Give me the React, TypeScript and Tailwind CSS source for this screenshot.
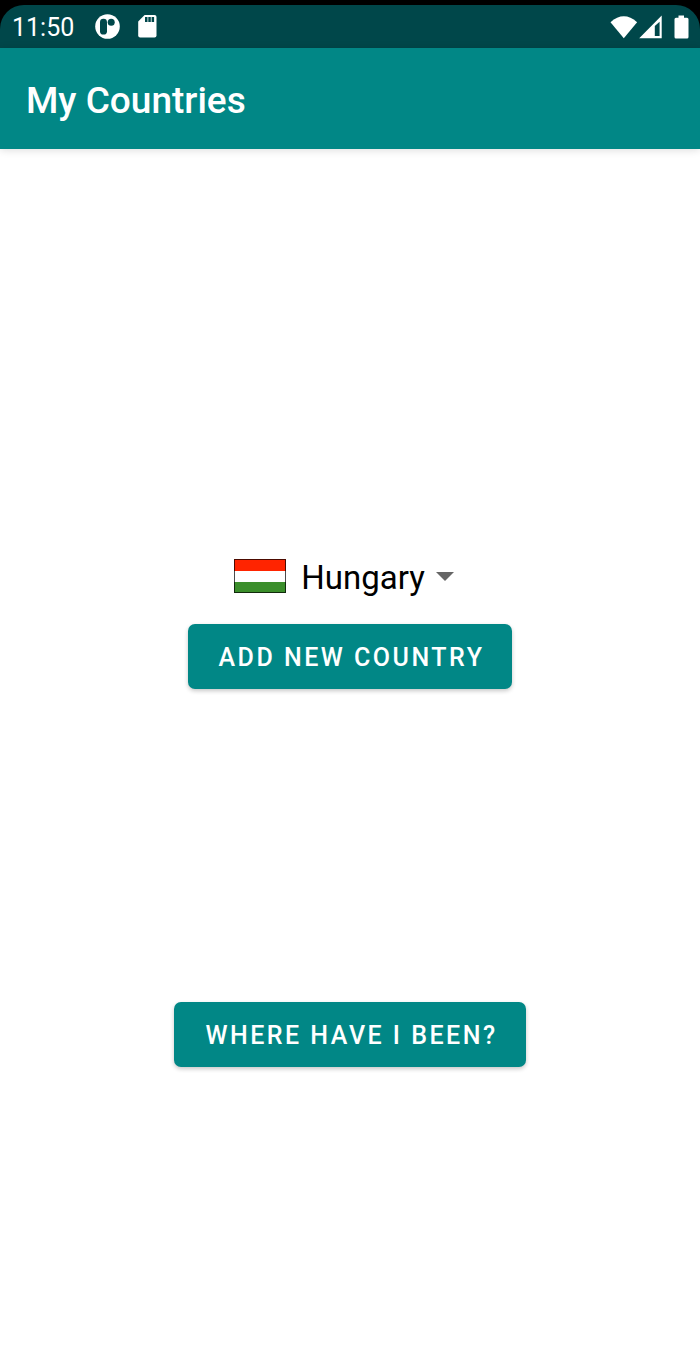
import { useState } from "react";

function StatusBar() {
  return (
    <div className="bg-black pt-[5px]">
      <div className="flex h-[43px] items-center justify-between rounded-t-[24px] bg-[#00474a] pr-[11px] pl-3 text-white">
        <div className="flex items-center">
          <span className="pt-[3px] text-[25px] leading-8">11:50</span>
          <svg className="ml-[21px] size-[25px]" viewBox="0 0 25 25" aria-hidden="true">
            <circle cx="12.5" cy="12.5" r="12.3" fill="white" />
            <rect x="5" y="4.8" width="7" height="15.8" rx="3.4" fill="#00474a" />
            <circle cx="16.2" cy="8.2" r="3.5" fill="#00474a" />
          </svg>
          <svg className="ml-[18px] h-[23px] w-[19px]" viewBox="0 0 19 23" aria-hidden="true">
            <path
              d="M6.6 0H16.5Q18.5 0 18.5 2V20.5Q18.5 22.5 16.5 22.5H2.2Q.2 22.5 .2 20.5V6.4Z"
              fill="white"
            />
            <path d="M7 2h2.5v5H7zM10.3 2h2.5v5h-2.5zM13.6 2h2.5v5h-2.5z" fill="#00474a" />
          </svg>
        </div>
        <div className="flex items-center">
          <svg className="h-6 w-7" viewBox="0 0 28 24" aria-hidden="true">
            <path d="M.5 7.2Q13.8-4.6 27.1 7.2L13.8 23.2Z" fill="white" />
          </svg>
          <svg className="ml-px h-6 w-[23px]" viewBox="0 0 23 24" aria-hidden="true">
            <path
              fillRule="evenodd"
              d="M22.7.5V23.3H.2ZM20.6 6.8L15.8 11V21H20.6Z"
              fill="white"
            />
          </svg>
          <svg className="ml-3 h-6 w-[15px]" viewBox="0 0 15 24" aria-hidden="true">
            <path
              d="M4.5.5H10V2.7H13Q14.5 2.7 14.5 4.2V22Q14.5 23.5 13 23.5H2Q.5 23.5 .5 22V4.2Q.5 2.7 2 2.7H4.5Z"
              fill="white"
            />
          </svg>
        </div>
      </div>
    </div>
  );
}

function HungaryFlag() {
  return (
    <svg className="h-[34px] w-[52px]" viewBox="0 0 52 34" role="img" aria-label="Flag of Hungary">
      <rect width="52" height="12" fill="#ff2400" />
      <rect y="12" width="52" height="11" fill="white" />
      <rect y="23" width="52" height="11" fill="#3b8e2b" />
      <rect x=".5" y=".5" width="51" height="33" fill="none" stroke="black" strokeOpacity=".7" />
    </svg>
  );
}

function ActionButton({ children }: { children: string }) {
  return (
    <button
      type="button"
      className="h-[65px] rounded-[7px] bg-[#018786] pt-[3px] pr-7 pl-[31px] text-[25px] leading-8 font-medium tracking-widest text-white uppercase shadow-[0_2px_4px_rgba(0,0,0,0.22)]"
    >
      {children}
    </button>
  );
}

export default function App() {
  const [country, setCountry] = useState("Hungary");

  return (
    <div className="flex min-h-screen flex-col bg-white font-['Roboto',sans-serif]">
      <StatusBar />
      <header className="flex h-[101px] items-center bg-[#018786] px-[26px] pt-1 shadow-[0_1px_8px_rgba(0,0,0,0.14)]">
        <h1 className="text-[37px] leading-10 font-medium text-white">My Countries</h1>
      </header>
      <main className="flex flex-1 flex-col items-center">
        <div className="flex-[40]" />
        <div className="flex items-center gap-[15px]">
          <HungaryFlag />
          <div className="relative flex items-center">
            <select
              aria-label="Country"
              value={country}
              onChange={(event) => setCountry(event.target.value)}
              className="field-sizing-content h-12 appearance-none bg-transparent pt-1 pr-[41px] text-[33px] leading-10 text-black"
            >
              <option>Hungary</option>
            </select>
            <svg
              className="pointer-events-none absolute right-3 h-[9px] w-[18px]"
              viewBox="0 0 18 9"
              aria-hidden="true"
            >
              <path d="M0 0H18L9 9Z" fill="#666666" />
            </svg>
          </div>
        </div>
        <div className="mt-6 flex">
          <ActionButton>Add new country</ActionButton>
        </div>
        <div className="flex-[31]" />
        <ActionButton>Where have I been?</ActionButton>
        <div className="flex-[30]" />
      </main>
    </div>
  );
}
